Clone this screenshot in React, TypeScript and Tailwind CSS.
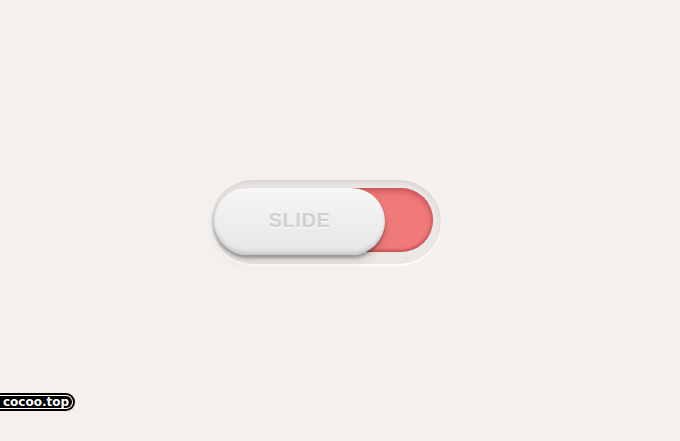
import React from "react";

function SlideToggle() {
  return (
    <div className="ml-[-28px] mt-[3px] h-[84px] w-[230px] rounded-full bg-[#ebe7e4] p-[8px] shadow-[inset_0_3px_5px_rgba(0,0,0,0.08),0_2px_2px_rgba(255,255,255,0.9)]">
      <div className="relative h-[64px] w-[214px] rounded-full bg-[#f07a7a] shadow-[inset_0_3px_6px_rgba(150,30,30,0.45),inset_0_-2px_3px_rgba(120,20,20,0.35)]">
        <div className="absolute left-[-5px] top-0 flex h-[67px] w-[171px] items-center justify-center rounded-full bg-gradient-to-b from-[#f7f7f7] to-[#e5e5e5] shadow-[inset_0_-3px_3px_rgba(0,0,0,0.12),0_3px_3px_rgba(0,0,0,0.28),0_6px_10px_rgba(0,0,0,0.12)]">
          <span className="mt-[-4px] text-[20px] font-bold tracking-[0.6px] text-[#d0d0d0] [font-family:'Liberation_Sans',Arial,sans-serif] [text-shadow:0_1px_0_rgba(255,255,255,0.8)]">
            SLIDE
          </span>
        </div>
      </div>
    </div>
  );
}

export default function App() {
  return (
    <div className="relative flex h-[441px] w-[680px] items-center justify-center bg-[#f4f0ee]">
      <SlideToggle />
      <div className="absolute left-[-10px] top-[393px] flex h-[18px] items-center rounded-r-full bg-black pl-[10px] pr-[2px]">
        <span className="flex h-[14px] items-center rounded-r-full border border-l-0 border-white pl-[3px] pr-[3px] text-[12px] font-bold leading-none text-white [font-family:'DejaVu_Sans',sans-serif]">
          cocoo.top
        </span>
      </div>
    </div>
  );
}
